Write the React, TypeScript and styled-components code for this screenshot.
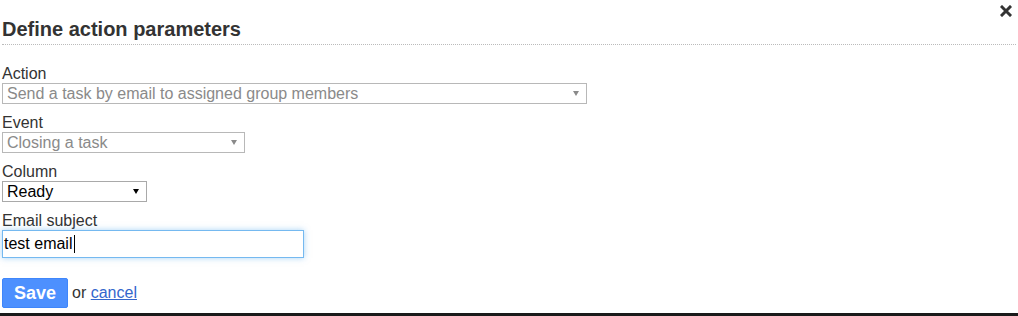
import styled, { createGlobalStyle } from "styled-components";

const GlobalStyle = createGlobalStyle`
  html, body {
    margin: 0;
    padding: 0;
    background: #fff;
  }
  body {
    font-family: "Liberation Sans", Arial, sans-serif;
    font-size: 16px;
    color: #333;
  }
`;

const Page = styled.div`
  width: 1018px;
  height: 316px;
  display: flex;
  flex-direction: column;
  overflow: hidden;
`;

const Content = styled.div`
  flex: 1;
  padding: 0 2px;
`;

const TopBar = styled.div`
  height: 18px;
  display: flex;
  justify-content: flex-end;
  align-items: flex-start;
  padding-right: 4px;
`;

const CloseButton = styled.a`
  display: block;
  width: 12px;
  height: 12px;
  margin-top: 3px;
  cursor: pointer;
`;

const Title = styled.h2`
  margin: 0;
  font-size: 20px;
  line-height: 23px;
  font-weight: bold;
  color: #333;
  padding-bottom: 3px;
  border-bottom: 1px dotted #bbb;
`;

const Form = styled.form`
  padding-top: 20px;
`;

const Label = styled.label`
  display: block;
  line-height: 18px;
  color: #333;
  margin-top: 10px;
  &:first-child {
    margin-top: 0;
  }
`;

const SelectWrap = styled.div<{ $width: number }>`
  position: relative;
  width: ${(p) => p.$width}px;
  height: 21px;
`;

const Select = styled.select<{ $disabled?: boolean }>`
  appearance: none;
  -webkit-appearance: none;
  box-sizing: border-box;
  width: 100%;
  height: 100%;
  margin: 0;
  padding: 0 20px 0 4px;
  font-family: "Liberation Sans", Arial, sans-serif;
  font-size: 16px;
  line-height: 19px;
  background: #fff;
  border: 1px solid ${(p) => (p.$disabled ? "#b8b8b8" : "#a9a9a9")};
  border-radius: 0;
  color: ${(p) => (p.$disabled ? "#8a8a8a" : "#000")};
  opacity: 1;
`;

const Arrow = styled.span<{ $disabled?: boolean }>`
  position: absolute;
  right: 8px;
  top: 8px;
  width: 0;
  height: 0;
  border-left: 3px solid transparent;
  border-right: 3px solid transparent;
  border-top: 5px solid ${(p) => (p.$disabled ? "#8a8a8a" : "#000")};
  pointer-events: none;
`;

const InputWrap = styled.div`
  position: relative;
  width: 302px;
`;

const TextInput = styled.input`
  box-sizing: border-box;
  display: block;
  width: 302px;
  height: 28px;
  margin: 0;
  padding: 0 1px;
  font-family: "Liberation Sans", Arial, sans-serif;
  font-size: 16px;
  color: #000;
  caret-color: transparent;
  border: 1px solid rgba(82, 168, 236, 0.8);
  box-shadow: 0 0 6px rgba(82, 168, 236, 0.5);
  outline: none;
  border-radius: 0;
`;

/* text cursor drawn at the end of the typed value */
const Caret = styled.span`
  position: absolute;
  left: 72px;
  top: 5px;
  width: 1px;
  height: 18px;
  background: #000;
  pointer-events: none;
`;

const Actions = styled.div`
  display: flex;
  align-items: center;
  padding-top: 20px;
  gap: 4px;
  color: #333;
`;

const Button = styled.button`
  height: 30px;
  padding: 0 11px;
  font-family: "Liberation Sans", Arial, sans-serif;
  font-size: 18px;
  font-weight: bold;
  color: #fff;
  background: #4d90fe;
  border: 1px solid #3f86fb;
  border-radius: 2px;
  cursor: pointer;
`;

const Link = styled.a`
  color: #3366cc;
  text-decoration: underline;
`;

const BottomBar = styled.div`
  height: 3px;
  background: #1a1a1a;
`;

function Field({
  label,
  width,
  value,
  disabled,
}: {
  label: string;
  width: number;
  value: string;
  disabled?: boolean;
}) {
  return (
    <>
      <Label>{label}</Label>
      <SelectWrap $width={width}>
        <Select $disabled={disabled} disabled={disabled} defaultValue={value}>
          <option>{value}</option>
        </Select>
        <Arrow $disabled={disabled} />
      </SelectWrap>
    </>
  );
}

export default function App() {
  return (
    <Page>
      <GlobalStyle />
      <Content>
        <TopBar>
          <CloseButton title="Close">
            <svg width="12" height="12" viewBox="0 0 12 12">
              <path
                d="M2 2 L10 10 M10 2 L2 10"
                stroke="#333"
                strokeWidth="3"
                strokeLinecap="square"
              />
            </svg>
          </CloseButton>
        </TopBar>
        <Title>Define action parameters</Title>
        <Form onSubmit={(e) => e.preventDefault()}>
          <Field
            label="Action"
            width={585}
            value="Send a task by email to assigned group members"
            disabled
          />
          <Field label="Event" width={243} value="Closing a task" disabled />
          <Field label="Column" width={145} value="Ready" />
          <Label htmlFor="email-subject">Email subject</Label>
          <InputWrap>
            <TextInput id="email-subject" type="text" defaultValue="test email" />
            <Caret />
          </InputWrap>
          <Actions>
            <Button type="submit">Save</Button>
            <span>
              or <Link href="#">cancel</Link>
            </span>
          </Actions>
        </Form>
      </Content>
      <BottomBar />
    </Page>
  );
}
